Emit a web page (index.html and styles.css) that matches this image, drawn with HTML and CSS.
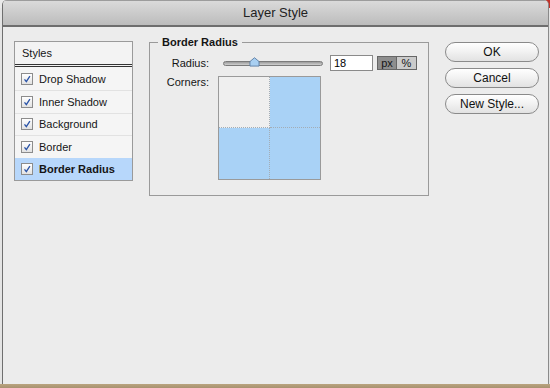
FILE: index.html
```html
<!DOCTYPE html>
<html lang="en">
<head>
    <meta charset="UTF-8">
    <meta name="viewport" content="width=device-width, initial-scale=1.0">
    <title>Layer Style</title>
    <link rel="stylesheet" href="styles.css">
</head>
<body>
    <div class="window">
        <header class="titlebar">Layer Style</header>

        <main class="content">
            <!-- lista de estilos -->
            <div class="styles-panel">
                <div class="styles-head">Styles</div>
                <ul class="styles-list">
                    <li class="style-row">
                        <span class="check"><svg viewBox="0 0 12 12"><path d="M3 6.5 L5.2 9.2 L9.5 2.5" /></svg></span>
                        Drop Shadow
                    </li>
                    <li class="style-row">
                        <span class="check"><svg viewBox="0 0 12 12"><path d="M3 6.5 L5.2 9.2 L9.5 2.5" /></svg></span>
                        Inner Shadow
                    </li>
                    <li class="style-row">
                        <span class="check"><svg viewBox="0 0 12 12"><path d="M3 6.5 L5.2 9.2 L9.5 2.5" /></svg></span>
                        Background
                    </li>
                    <li class="style-row">
                        <span class="check"><svg viewBox="0 0 12 12"><path d="M3 6.5 L5.2 9.2 L9.5 2.5" /></svg></span>
                        Border
                    </li>
                    <li class="style-row selected">
                        <span class="check"><svg viewBox="0 0 12 12"><path d="M3 6.5 L5.2 9.2 L9.5 2.5" /></svg></span>
                        Border Radius
                    </li>
                </ul>
            </div>

            <fieldset class="group">
                <legend>Border Radius</legend>
                <div class="form-grid">
                    <label class="field-label">Radius:</label>
                    <div class="radius-controls">
                        <div class="slider">
                            <div class="slider-track"></div>
                            <svg class="slider-thumb" viewBox="0 0 12 11">
                                <path d="M1 5 L6 0.8 L11 5 L11 10 L1 10 Z" />
                            </svg>
                        </div>
                        <input class="num-input" type="text" value="18">
                        <div class="unit-toggle">
                            <span class="unit active">px</span>
                            <span class="unit">%</span>
                        </div>
                    </div>

                    <label class="field-label corners-label">Corners:</label>
                    <div class="corners">
                        <div class="corner"></div>
                        <div class="corner on"></div>
                        <div class="corner on"></div>
                        <div class="corner on"></div>
                    </div>
                </div>
            </fieldset>

            <div class="buttons">
                <button class="btn">OK</button>
                <button class="btn">Cancel</button>
                <button class="btn">New Style...</button>
            </div>
        </main>
    </div>
</body>
</html>
```

FILE: styles.css
```css
:root {
    --win-bg: #ececec;
    --line: #9a9a9a;
    --text: #151515;
    --blue-sel: #b7d7fb;
    --blue-corner: #a9d2f6;
}

* {
    margin: 0;
    padding: 0;
    box-sizing: border-box;
}

body {
    font-family: 'Liberation Sans', Arial, sans-serif;
    font-size: 11px;
    color: var(--text);
    width: 550px;
    height: 388px;
    overflow: hidden;
    background:
        linear-gradient(90deg, #e9e9e9 0, #e9e9e9 382px, #dc7a32 390px, #d05a2c 470px, #c2322a 550px) top / 100% 8px no-repeat,
        linear-gradient(#b9a47f, #a89270) bottom / 100% 4px no-repeat,
        #e4e4e4;
}

.window {
    margin-left: 2px;
    width: 547px;
    height: 384px;
    background: var(--win-bg);
    border-left: 1px solid #6f6f6f;
    border-right: 1px solid #8a8a8a;
    border-radius: 5px 5px 0 0;
    display: flex;
    flex-direction: column;
    overflow: hidden;
}

.titlebar {
    height: 27px;
    flex: none;
    background: linear-gradient(#dadada, #bcbcbc);
    border-top: 1px solid #9c9c9c;
    border-bottom: 2px solid #6e6e6e;
    text-align: center;
    font-size: 13px;
    line-height: 24px;
    color: #222;
}

.content {
    flex: 1;
    display: flex;
    align-items: flex-start;
    gap: 16px;
    padding: 14px 8px 0 11px;
}

/* painel de estilos */
.styles-panel {
    width: 119px;
    flex: none;
    border: 1px solid var(--line);
    background: #f5f5f5;
}

.styles-head {
    height: 25px;
    line-height: 23px;
    padding-left: 7px;
    background: #f3f3f3;
    border-bottom: 3px double #333;
}

.styles-list {
    list-style: none;
}

.style-row {
    height: 22.5px;
    display: flex;
    align-items: center;
    gap: 6px;
    padding-left: 6px;
    border-top: 1px solid #e2e2e2;
}

.style-row:first-child {
    border-top: none;
    height: 23px;
}

.style-row.selected {
    background: var(--blue-sel);
    font-weight: bold;
    border-top-color: var(--blue-sel);
}

.check {
    width: 12px;
    height: 12px;
    border: 1px solid #8c8c8c;
    background: linear-gradient(#ffffff, #e2e2e2);
    display: flex;
}

.check svg {
    width: 10px;
    height: 10px;
}

.check path {
    fill: none;
    stroke: #2c55a8;
    stroke-width: 1.6;
}

/* grupo Border Radius */
.group {
    width: 280px;
    flex: none;
    margin-top: -5px;
    border: 1px solid var(--line);
    padding: 6px 0 15px;
}

.group legend {
    margin-left: 8px;
    padding: 0 4px;
    font-weight: bold;
    font-size: 11px;
    line-height: 13px;
}

.form-grid {
    display: grid;
    grid-template-columns: 59px auto;
    column-gap: 9px;
    row-gap: 4px;
    align-items: center;
}

.field-label {
    text-align: right;
}

.corners-label {
    align-self: start;
    margin-top: 1px;
}

.radius-controls {
    display: flex;
    align-items: center;
}

.slider {
    width: 110px;
    height: 16px;
    position: relative;
    display: flex;
    align-items: center;
    padding: 0 5px;
}

.slider-track {
    width: 100%;
    height: 5px;
    border-radius: 3px;
    border: 1px solid #7a7a7a;
    background: linear-gradient(#9a9a9a, #d0d0d0);
}

.slider-thumb {
    position: absolute;
    left: 31px;
    top: 2px;
    width: 11px;
    height: 10px;
}

.slider-thumb path {
    fill: #a8cff2;
    stroke: #5a7da3;
    stroke-width: 1;
}

.num-input {
    width: 43px;
    height: 16px;
    margin-left: 2px;
    border: 1px solid #8a8a8a;
    background: #fff;
    font-family: inherit;
    font-size: 11px;
    padding-left: 3px;
    outline: none;
}

.unit-toggle {
    display: flex;
    margin-left: 4px;
    border: 1px solid #666;
    height: 14px;
}

.unit {
    width: 19px;
    text-align: center;
    line-height: 12px;
    background: #cbcbcb;
}

.unit.active {
    background: #8e8e8e;
    border-right: 1px solid #666;
}

.corners {
    width: 103px;
    height: 104px;
    margin-top: 1px;
    border: 1px solid #9a9a9a;
    display: grid;
    grid-template-columns: 1fr 1fr;
    grid-template-rows: 1fr 1fr;
}

.corner {
    background: #efefef;
}

.corner.on {
    background: var(--blue-corner);
}

.corner:nth-child(1),
.corner:nth-child(3) {
    border-right: 1px dotted #a3adb6;
}

.corner:nth-child(1),
.corner:nth-child(2) {
    border-bottom: 1px dotted #a3adb6;
}

/* botoes */
.buttons {
    width: 94px;
    flex: none;
    display: flex;
    flex-direction: column;
    gap: 6px;
    margin-top: 1px;
}

.btn {
    height: 20px;
    border: 1px solid #8a8a8a;
    border-radius: 10px;
    background: linear-gradient(#ffffff, #f1f1f1 50%, #e2e2e2);
    font-family: inherit;
    font-size: 12px;
    color: #111;
}
```
